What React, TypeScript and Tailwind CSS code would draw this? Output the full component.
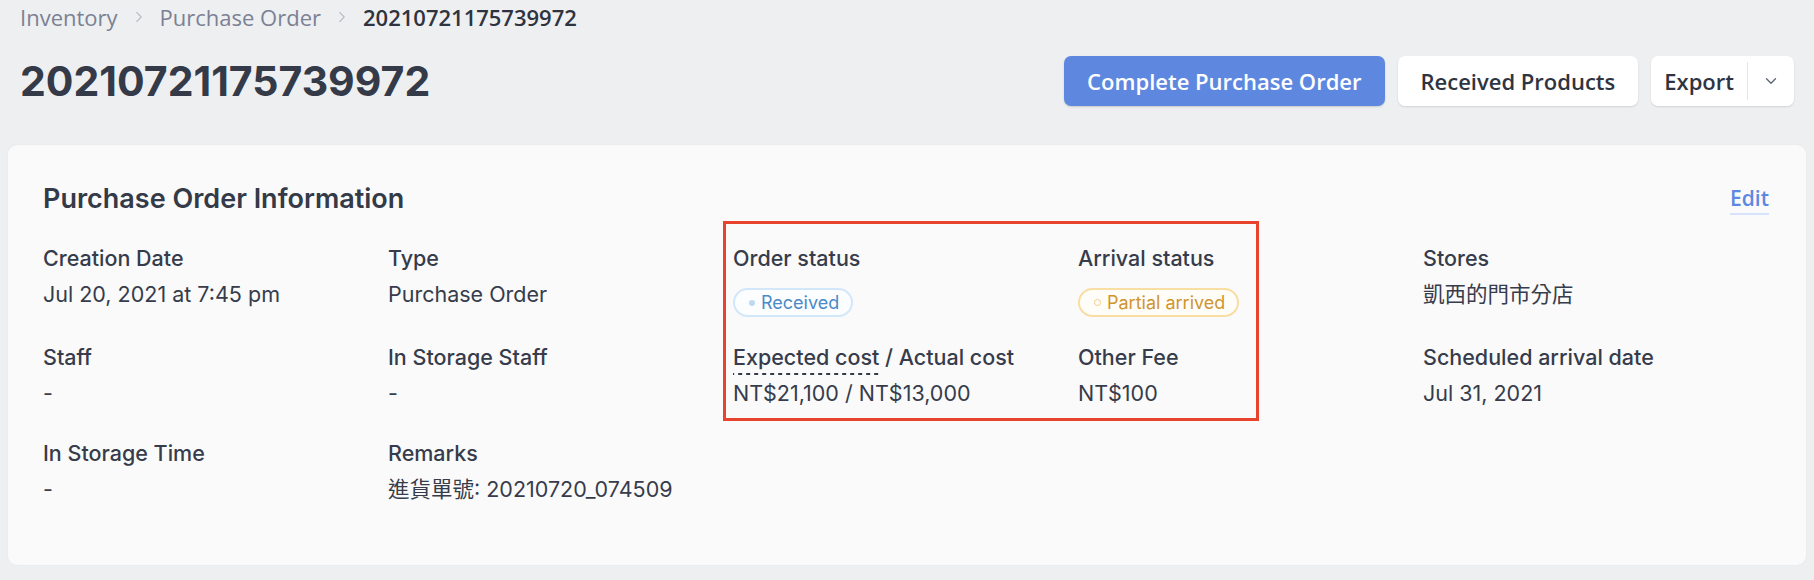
import { ChevronDown, ChevronRight } from 'lucide-react'

type Field = {
  label: string
  value?: string
  badge?: 'received' | 'partial'
  dashed?: boolean
}

const rows: Field[][] = [
  [
    { label: 'Creation Date', value: 'Jul 20, 2021 at 7:45 pm' },
    { label: 'Type', value: 'Purchase Order' },
    { label: 'Order status', badge: 'received' },
    { label: 'Arrival status', badge: 'partial' },
    { label: 'Stores', value: '凱西的門市分店' },
  ],
  [
    { label: 'Staff', value: '-' },
    { label: 'In Storage Staff', value: '-' },
    {
      label: 'Expected cost / Actual cost',
      value: 'NT$21,100 / NT$13,000',
      dashed: true,
    },
    { label: 'Other Fee', value: 'NT$100' },
    { label: 'Scheduled arrival date', value: 'Jul 31, 2021' },
  ],
  [
    { label: 'In Storage Time', value: '-' },
    { label: 'Remarks', value: '進貨單號: 20210720_074509' },
  ],
]

const Badge = ({ kind }: { kind: 'received' | 'partial' }) =>
  kind === 'received' ? (
    <span className="mt-[16px] inline-flex h-[29px] w-fit items-center gap-[6px] rounded-full border-2 border-[#d3e7fa] bg-[#fbfdff] pl-[14px] pr-[12px] text-[18px] leading-none text-[#4a8ac8]">
      <span className="size-[6px] rounded-full bg-[#bcdaf4]" />
      Received
    </span>
  ) : (
    <span className="mt-[16px] inline-flex h-[29px] w-fit items-center gap-[6px] rounded-full border-2 border-[#f8dea3] bg-[#fffdf8] pl-[14px] pr-[12px] text-[18px] leading-none text-[#d0952f]">
      <span className="size-[7px] rounded-full border border-[#f1cd85]" />
      Partial arrived
    </span>
  )

const InfoCell = ({ field }: { field: Field }) => {
  const [first, ...rest] = field.label.split(' / ')
  return (
    <div className="flex flex-col">
      <div className="text-[21.5px] font-medium leading-7 text-[#363c4b]">
        {field.dashed ? (
          <>
            <span className="bg-[linear-gradient(to_right,#363c4b_50%,transparent_50%)] bg-[length:8px_2px] bg-bottom bg-repeat-x pb-[5px]">
              {first}
            </span>
            {' / '}
            {rest.join(' / ')}
          </>
        ) : (
          field.label
        )}
      </div>
      {field.badge ? (
        <Badge kind={field.badge} />
      ) : (
        <div className="mt-2 text-[21.5px] leading-7 text-[#363c4b]">
          {field.value}
        </div>
      )}
    </div>
  )
}

export default function App() {
  return (
    <div className="min-h-[580px] bg-[#eeeff1] font-['Inter','Noto_Sans_CJK_TC',sans-serif] antialiased">
      <header className="px-5">
        <nav className="flex h-[34px] items-center gap-[12px] font-['Open_Sans',sans-serif] text-[22px] text-[#7b8194]">
          <span>Inventory</span>
          <ChevronRight size={18} strokeWidth={1.5} className="text-[#b9bdc7]" />
          <span>Purchase Order</span>
          <ChevronRight size={18} strokeWidth={1.5} className="text-[#b9bdc7]" />
          <span className="font-semibold text-[#2e3340]">
            20210721175739972
          </span>
        </nav>

        <div className="mt-[22px] flex h-[50px] items-center justify-between">
          <h1 className="text-[41px] font-bold leading-none text-[#343a48]">
            20210721175739972
          </h1>
          <div className="flex items-center gap-[13px] font-['Open_Sans',sans-serif] text-[22px] font-semibold">
            <button className="h-[50px] rounded-[7px] bg-[#5e88e0] px-[23px] text-white shadow-[0_1px_2px_rgba(0,0,0,0.15)]">
              Complete Purchase Order
            </button>
            <button className="h-[50px] rounded-[7px] bg-white px-[23px] text-[#2f3441] shadow-[0_1px_2px_rgba(0,0,0,0.12)]">
              Received Products
            </button>
            <div className="flex h-[50px] items-center rounded-[7px] bg-white text-[#2f3441] shadow-[0_1px_2px_rgba(0,0,0,0.12)]">
              <span className="pl-[13px] pr-[13px]">Export</span>
              <span className="h-[38px] w-px bg-[#e3e5e9]" />
              <span className="flex w-[46px] justify-center">
                <ChevronDown size={18} strokeWidth={1.75} className="text-[#5d6475]" />
              </span>
            </div>
          </div>
        </div>
      </header>

      <section className="mx-2 mt-[39px] rounded-[9px] bg-[#fafafa] pb-[62px] pl-[35px] pr-[37px] pt-[38px] shadow-[0_0_2px_rgba(0,0,0,0.06)]">
        <div className="flex h-8 items-center justify-between">
          <h2 className="text-[27px] font-semibold text-[#343a48]">
            Purchase Order Information
          </h2>
          <a className="border-b-2 border-[#d7e3fb] font-['Open_Sans',sans-serif] text-[21px] font-semibold leading-[30px] text-[#5d88e0]">
            Edit
          </a>
        </div>

        <div className="relative mt-[29px] grid grid-cols-[repeat(5,345px)] grid-rows-[73px_70px_auto] gap-y-[26px]">
          {rows.map((row, r) =>
            row.map((field, c) => (
              <InfoCell key={`${r}-${c}`} field={field} />
            )),
          )}
          <div className="pointer-events-none absolute left-[680px] top-[-23px] h-[200px] w-[536px] border-[3px] border-[#e8432d]" />
        </div>
      </section>
    </div>
  )
}
